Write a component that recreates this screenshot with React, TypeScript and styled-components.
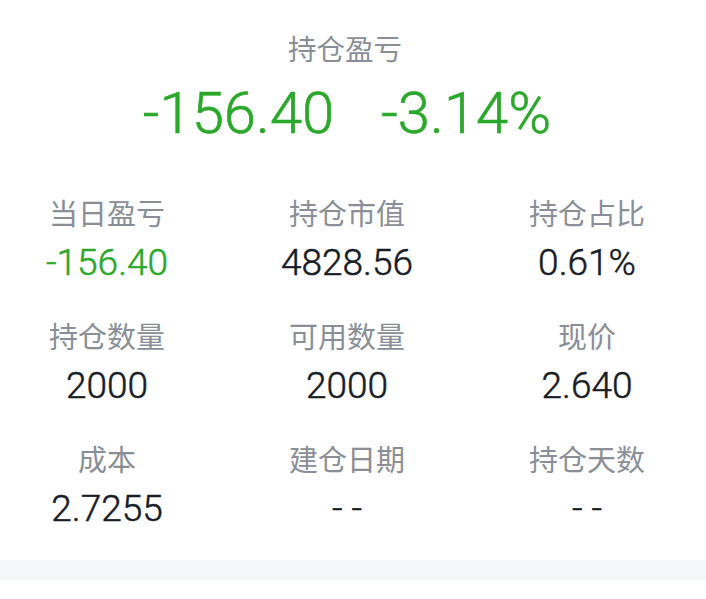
import React, { FC } from 'react';
import styled, { createGlobalStyle } from 'styled-components';

const GlobalStyle = createGlobalStyle`
  body {
    margin: 0;
    background: #ffffff;
    font-family: Roboto, "Noto Sans CJK SC", sans-serif;
  }
`;

type Stat = {
  label: string;
  value: string;
  tone?: 'down' | 'plain';
};

const stats: Stat[] = [
  { label: '当日盈亏', value: '-156.40', tone: 'down' },
  { label: '持仓市值', value: '4828.56' },
  { label: '持仓占比', value: '0.61%' },
  { label: '持仓数量', value: '2000' },
  { label: '可用数量', value: '2000' },
  { label: '现价', value: '2.640' },
  { label: '成本', value: '2.7255' },
  { label: '建仓日期', value: '- -' },
  { label: '持仓天数', value: '- -' },
];

const Page = styled.div`
  background: #ffffff;
  overflow: hidden;
`;

// content is centred on x=347, a touch left of the window centre
const Panel = styled.section`
  width: 720px;
  margin-left: -13px;
  padding: 31px 0 29px;
`;

const Summary = styled.div`
  display: flex;
  flex-direction: column;
  align-items: center;
  gap: 10px;
`;

const Caption = styled.div`
  font-size: 28.5px;
  line-height: 40px;
  color: #8a8e96;
  margin-left: -4px;
`;

const BigFigures = styled.div`
  display: flex;
  gap: 47px;
  font-size: 58px;
  font-weight: 300;
  line-height: 64px;
  color: #2aa82a;
  -webkit-text-stroke: 0.6px #2aa82a;
`;

const Grid = styled.div`
  display: grid;
  grid-template-columns: repeat(3, 240px);
  row-gap: 33px;
  margin-top: 50px;
`;

const Cell = styled.div`
  display: flex;
  flex-direction: column;
  align-items: center;
  gap: 6px;
`;

const Label = styled.div`
  font-size: 29px;
  line-height: 40px;
  color: #8a8e96;
`;

const Value = styled.div<{ $tone?: 'down' | 'plain' }>`
  --c: ${(props) => (props.$tone === 'down' ? '#2aa82a' : '#171c26')};
  font-size: 37px;
  font-weight: 300;
  line-height: 44px;
  color: var(--c);
  -webkit-text-stroke: 0.5px var(--c);
`;

const Divider = styled.div`
  height: 20px;
  background: #f4f7fa;
`;

const App: FC = () => {
  return (
    <>
      <GlobalStyle />
      <Page>
        <Panel>
          <Summary>
            <Caption>持仓盈亏</Caption>
            <BigFigures>
              <span>-156.40</span>
              <span>-3.14%</span>
            </BigFigures>
          </Summary>
          <Grid>
            {stats.map((s) => (
              <Cell key={s.label}>
                <Label>{s.label}</Label>
                <Value $tone={s.tone}>{s.value}</Value>
              </Cell>
            ))}
          </Grid>
        </Panel>
        <Divider />
      </Page>
    </>
  );
};

export default App;
